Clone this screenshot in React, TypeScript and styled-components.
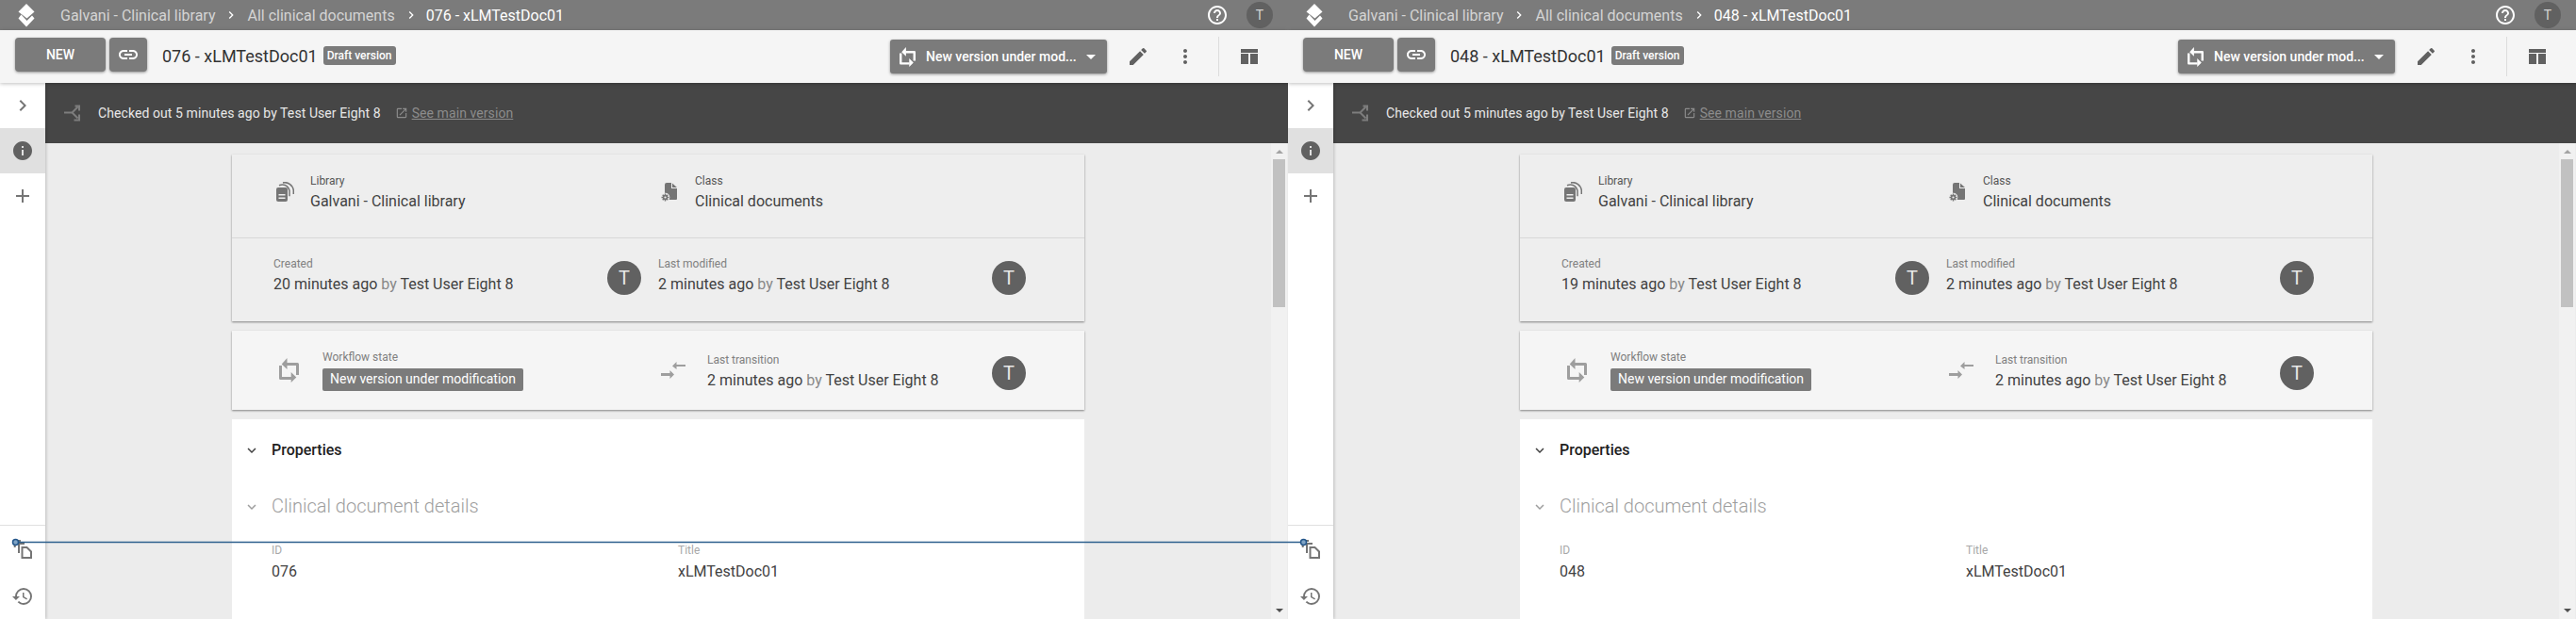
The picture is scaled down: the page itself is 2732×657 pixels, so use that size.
import React from "react";
import styled, { createGlobalStyle } from "styled-components";
import {
  MdAdd,
  MdArrowDropDown,
  MdChevronRight,
  MdEdit,
  MdExpandMore,
  MdHelpOutline,
  MdHistory,
  MdInfo,
  MdLink,
  MdMoreVert,
  MdOpenInNew,
} from "react-icons/md";

const GlobalStyle = createGlobalStyle`
  html, body {
    margin: 0;
    padding: 0;
    overflow: hidden;
    background: #ececec;
  }
  * {
    box-sizing: border-box;
  }
`;

const Page = styled.div`
  position: relative;
  display: flex;
  width: 2732px;
  height: 657px;
  overflow: hidden;
  font-family: Roboto, "Liberation Sans", sans-serif;
  color: #333333;
`;

const Pane = styled.section`
  display: flex;
  flex-direction: column;
  width: 1366px;
  height: 657px;
  overflow: hidden;
`;

const TopBar = styled.header`
  display: flex;
  align-items: center;
  flex: 0 0 32px;
  padding: 0 16px 0 19px;
  background: #7b7b7b;
  color: #d4d4d4;
  font-size: 16px;
`;

const Crumbs = styled.nav`
  display: flex;
  align-items: center;
  flex: 1;
  margin-left: 27px;
`;

const CrumbSep = styled.span`
  display: flex;
  width: 34px;
  justify-content: center;
  color: #fff;
  font-size: 16px;
`;

const CurrentCrumb = styled.span`
  color: #ffffff;
  margin-left: -1px;
`;

const HelpButton = styled.span`
  display: flex;
  margin-right: 19px;
  color: #ffffff;
  font-size: 24px;
`;

const HeaderAvatar = styled.span`
  display: flex;
  align-items: center;
  justify-content: center;
  width: 28px;
  height: 28px;
  border-radius: 50%;
  background: #616161;
  color: #d4d4d4;
  font-size: 14px;
`;

const Toolbar = styled.div`
  position: relative;
  z-index: 3;
  display: flex;
  align-items: center;
  flex: 0 0 56px;
  padding: 0 32px 0 16px;
  background: #f5f5f5;
  box-shadow: 0 1px 4px rgba(0, 0, 0, 0.25);
`;

const GreyButton = styled.button<{ $width: number }>`
  display: flex;
  align-items: center;
  justify-content: center;
  width: ${(p) => p.$width}px;
  height: 36px;
  margin: -4px 4px 0 0;
  padding: 0;
  border: 0;
  border-radius: 4px;
  background: #7b7b7b;
  box-shadow: 0 1px 3px rgba(0, 0, 0, 0.4);
  color: #ffffff;
  font: 500 14px Roboto, sans-serif;
`;

const DocTitle = styled.h1`
  margin: -2px 0 0 12px;
  color: #333333;
  font-size: 18px;
  font-weight: 400;
  white-space: nowrap;
`;

const DraftBadge = styled.span`
  margin: -2px 0 0 6px;
  padding: 2px 4px;
  height: 20px;
  border-radius: 3px;
  background: #7b7b7b;
  color: #ffffff;
  font-size: 12px;
  font-weight: 500;
  line-height: 16px;
  white-space: nowrap;
`;

const Spacer = styled.div`
  flex: 1;
`;

const StatusButton = styled.button`
  display: flex;
  align-items: center;
  width: 230px;
  height: 36px;
  padding: 0 0 0 10px;
  border: 0;
  border-radius: 3px;
  background: #7b7b7b;
  box-shadow: 0 1px 3px rgba(0, 0, 0, 0.4);
  color: #ffffff;
  font: 500 14px Roboto, sans-serif;
  white-space: nowrap;
`;

const StatusLabel = styled.span`
  width: 163px;
  margin-left: 11px;
  text-align: left;
`;

const ToolIcon = styled.span<{ $left: number }>`
  display: flex;
  margin-left: ${(p) => p.$left}px;
  color: #616161;
  font-size: 24px;
`;

const ToolDivider = styled.span`
  width: 1px;
  height: 42px;
  margin-left: 23px;
  background: #dddddd;
`;

const Body = styled.div`
  display: flex;
  flex: 1;
  min-height: 0;
`;

const Rail = styled.aside`
  position: relative;
  z-index: 2;
  display: flex;
  flex-direction: column;
  flex: 0 0 48px;
  background: #ffffff;
  box-shadow: 1px 0 3px rgba(0, 0, 0, 0.2);
  color: #757575;
`;

const RailItem = styled.div<{ $active?: boolean }>`
  display: flex;
  align-items: center;
  justify-content: center;
  height: 48px;
  background: ${(p) => (p.$active ? "#e0e0e0" : "transparent")};
  font-size: 24px;
  color: ${(p) => (p.$active ? "#616161" : "#757575")};
`;

const RailBottom = styled.div`
  margin-top: auto;
  padding-top: 3px;
  border-top: 1px solid #e0e0e0;
`;

const Main = styled.main`
  display: flex;
  flex-direction: column;
  flex: 1;
  min-width: 0;
`;

const Banner = styled.div`
  display: flex;
  align-items: center;
  flex: 0 0 64px;
  padding: 0 0 0 20px;
  background: #464646;
  color: #e8e8e8;
  font-size: 14px;
`;

const BannerText = styled.span`
  margin-left: 18px;
  letter-spacing: 0.08px;
`;

const MainLink = styled.a`
  display: flex;
  align-items: center;
  margin-left: 15px;
  color: #8c8c8c;
  letter-spacing: 0.08px;
  text-decoration: underline;
`;

const LinkIcon = styled.span`
  display: flex;
  margin-right: 4px;
  font-size: 14px;
`;

const ScrollArea = styled.div`
  display: flex;
  flex: 1;
  min-height: 0;
  background: #ececec;
`;

const Content = styled.div`
  display: flex;
  flex-direction: column;
  align-items: center;
  flex: 1;
  gap: 10px;
  padding-top: 12px;
  overflow: hidden;
`;

const Scrollbar = styled.div`
  display: flex;
  flex-direction: column;
  align-items: center;
  flex: 0 0 17px;
  margin-right: 1px;
  background: #f1f1f1;
`;

const ScrollArrow = styled.span<{ $down?: boolean }>`
  width: 0;
  height: 0;
  margin: ${(p) => (p.$down ? "auto 0 7px" : "7px 0 0")};
  border-left: 4px solid transparent;
  border-right: 4px solid transparent;
  border-bottom: ${(p) => (p.$down ? "0" : "4px solid #a3a3a3")};
  border-top: ${(p) => (p.$down ? "4px solid #505050" : "0")};
`;

const ScrollThumb = styled.span`
  width: 13px;
  height: 157px;
  margin-top: 6px;
  background: #c1c1c1;
`;

const Card = styled.article<{ $tone: string }>`
  flex: 0 0 auto;
  width: 904px;
  background: ${(p) => p.$tone};
  box-shadow: 0 1px 2px rgba(0, 0, 0, 0.45);
`;

const InfoRow = styled.div<{ $height: number; $line?: boolean }>`
  display: grid;
  grid-template-columns: 408px 408px;
  height: ${(p) => p.$height}px;
  padding: 0 44px;
  border-bottom: ${(p) => (p.$line ? "1px solid #d8d8d8" : "0")};
`;

const InfoCell = styled.div<{ $top: number }>`
  display: flex;
  padding: ${(p) => p.$top}px 18px 0 0;
`;

const CellIcon = styled.span<{ $width: number; $left: number; $pad: number }>`
  display: flex;
  align-items: flex-start;
  flex: 0 0 ${(p) => p.$width}px;
  padding: ${(p) => p.$pad}px 0 0 ${(p) => p.$left}px;
  color: #9e9e9e;
`;

const CellText = styled.div`
  flex: 1;
`;

const Caption = styled.div<{ $dark?: boolean }>`
  height: 16px;
  color: ${(p) => (p.$dark ? "#555555" : "#808080")};
  font-size: 12px;
  line-height: 16px;
`;

const Value = styled.div`
  margin-top: 4px;
  color: #424242;
  font-size: 16px;
  line-height: 20px;
  white-space: nowrap;
`;

const By = styled.span`
  color: #888888;
`;

const Avatar = styled.span<{ $offset: number }>`
  display: flex;
  align-items: center;
  justify-content: center;
  flex: 0 0 36px;
  height: 36px;
  margin-top: ${(p) => p.$offset}px;
  border-radius: 50%;
  background: #616161;
  color: #e8e8e8;
  font-size: 20px;
`;

const StateTag = styled.span`
  display: inline-block;
  height: 24px;
  margin-top: 4px;
  padding: 0 8px;
  border-radius: 2px;
  background: #7b7b7b;
  color: #ffffff;
  font-size: 14px;
  line-height: 22px;
`;

const PropertiesCard = styled.article`
  flex: 0 0 auto;
  width: 904px;
  height: 300px;
  padding: 20px 0 0 12px;
  background: #ffffff;
`;

const SectionHead = styled.div`
  display: flex;
  align-items: center;
  height: 24px;
  color: #212121;
  font-size: 16px;
  font-weight: 500;
`;

const GroupHead = styled.div`
  display: flex;
  align-items: center;
  height: 28px;
  margin-top: 34px;
  color: #9e9e9e;
  font-size: 20px;
  font-weight: 300;
`;

const Chevron = styled.span<{ $muted?: boolean }>`
  display: flex;
  width: 30px;
  margin-top: 2px;
  color: ${(p) => (p.$muted ? "#9e9e9e" : "#424242")};
  font-size: 18px;
`;

const FieldGrid = styled.div`
  display: grid;
  grid-template-columns: 431px 300px;
  margin: 25px 0 0 30px;
`;

const FieldLabel = styled.div`
  height: 16px;
  color: #a8a8a8;
  font-size: 12px;
  line-height: 16px;
`;

const FieldValue = styled.div`
  margin-top: 5px;
  color: #424242;
  font-size: 16px;
  line-height: 20px;
`;

const Connector = styled.svg`
  position: absolute;
  left: 0;
  top: 0;
  z-index: 5;
  pointer-events: none;
`;

const CopySvg = styled.svg`
  margin-bottom: 4px;
`;

const Logo = () => (
  <svg width="18" height="25" viewBox="0 0 18 25" fill="#ffffff">
    <path d="M9 0l8.500 8.500-8 7-9-7z" />
    <path d="M3.500 11.500L.5 15.500 9 24.500l8.500-9-2.500-3-5.500 5.500z" />
  </svg>
);

const BranchIcon = () => (
  <svg width="18" height="18" viewBox="0 0 18 18" fill="none" stroke="#7d7d7d" strokeWidth="2">
    <path d="M0 8.500h8.500L14.500 2.500M17 1.500H11.500M16 1v5.500M8.500 8.500l6 6M16 10.500v6H10.500" />
  </svg>
);

const LibraryIcon = () => (
  <svg width="19" height="21" viewBox="0 0 19 21">
    <path fill="#757575" d="M2 6h8a2 2 0 0 1 2 2v11a2 2 0 0 1-2 2H2a2 2 0 0 1-2-2V8a2 2 0 0 1 2-2z" />
    <path fill="#eeeeee" d="M2.500 13h7v1.500h-7zM2.500 16.500h7V18h-7z" />
    <path fill="none" stroke="#757575" strokeWidth="1.500" d="M3 3.800c4-1.500 9-1 11 5.500v6M7 .9c5-1.200 10.500 2.500 11.300 8v4" />
  </svg>
);

const ClassIcon = () => (
  <svg width="18" height="20" viewBox="0 0 18 20">
    <path fill="#757575" d="M6 0h5v6h6v11a1 1 0 0 1-1 1H6a2 2 0 0 1-2-2V2a2 2 0 0 1 2-2zM12 0.500l5 4.500h-5z" />
    <circle cx="4.500" cy="15.500" r="4.800" fill="#eeeeee" />
    <path stroke="#757575" strokeWidth="1.500" d="M4.500 11.500v8M.5 15.500h8M1.700 12.700l5.600 5.600M7.300 12.700l-5.600 5.600" />
    <circle cx="4.500" cy="15.500" r="2.700" fill="#757575" />
    <circle cx="4.500" cy="15.500" r="1.100" fill="#eeeeee" />
  </svg>
);

const WorkflowIcon = ({ width, height }: { width: number; height: number }) => (
  <svg width={width} height={height} viewBox="0 0 21 26" fill="currentColor">
    <path fill="none" stroke="currentColor" strokeWidth="3" strokeLinejoin="round" d="M8 6.500H19.500V18M13 21.500H1.500V8" />
    <path d="M2.700 6.500L8.500 0v12zM18.300 20.500L12.700 15v11z" />
  </svg>
);

const TransitionIcon = () => (
  <svg width="28" height="18" viewBox="0 0 28 18" fill="#9e9e9e">
    <path d="M27 5h-9.500V8L13 4.500 17.500 0v3H27zM1 12h9.500V9l4.500 4.500-4.500 4.500v-3H1z" />
  </svg>
);

const CopyIcon = () => (
  <CopySvg width="20" height="20" viewBox="0 0 20 20" fill="none" stroke="#757575" strokeWidth="2">
    <path d="M0 1h8M1.700 0v8M5 4h7M6 3v11M9.500 8h5L19 12.500V19H9.500z" />
  </CopySvg>
);

const LayoutIcon = () => (
  <svg width="18" height="16" viewBox="0 0 18 16" fill="#616161">
    <path d="M0 0h18v4H0zM0 5h8v11H0zM10 5h8v11h-8z" />
  </svg>
);

type Doc = { id: string; created: string };

const DocumentPane = ({ id, created }: Doc) => (
  <Pane>
    <TopBar>
      <Logo />
      <Crumbs>
        <span>Galvani - Clinical library</span>
        <CrumbSep>
          <MdChevronRight />
        </CrumbSep>
        <span>All clinical documents</span>
        <CrumbSep>
          <MdChevronRight />
        </CrumbSep>
        <CurrentCrumb>{id} - xLMTestDoc01</CurrentCrumb>
      </Crumbs>
      <HelpButton>
        <MdHelpOutline />
      </HelpButton>
      <HeaderAvatar>T</HeaderAvatar>
    </TopBar>
    <Toolbar>
      <GreyButton $width={96}>NEW</GreyButton>
      <GreyButton $width={40}>
        <MdLink size={24} />
      </GreyButton>
      <DocTitle>{id} - xLMTestDoc01</DocTitle>
      <DraftBadge>Draft version</DraftBadge>
      <Spacer />
      <StatusButton>
        <WorkflowIcon width={17} height={21} />
        <StatusLabel>New version under mod...</StatusLabel>
        <MdArrowDropDown size={24} />
      </StatusButton>
      <ToolIcon $left={21}>
        <MdEdit />
      </ToolIcon>
      <ToolIcon $left={26}>
        <MdMoreVert />
      </ToolIcon>
      <ToolDivider />
      <ToolIcon $left={23}>
        <LayoutIcon />
      </ToolIcon>
    </Toolbar>
    <Body>
      <Rail>
        <RailItem>
          <MdChevronRight />
        </RailItem>
        <RailItem $active>
          <MdInfo />
        </RailItem>
        <RailItem>
          <MdAdd />
        </RailItem>
        <RailBottom>
          <RailItem>
            <CopyIcon />
          </RailItem>
          <RailItem>
            <MdHistory />
          </RailItem>
        </RailBottom>
      </Rail>
      <Main>
        <Banner>
          <BranchIcon />
          <BannerText>Checked out 5 minutes ago by Test User Eight 8</BannerText>
          <MainLink>
            <LinkIcon>
              <MdOpenInNew />
            </LinkIcon>
            See main version
          </MainLink>
        </Banner>
        <ScrollArea>
          <Content>
            <Card $tone="#eeeeee">
              <InfoRow $height={89} $line>
                <InfoCell $top={20}>
                  <CellIcon $width={39} $left={3} $pad={9}>
                    <LibraryIcon />
                  </CellIcon>
                  <CellText>
                    <Caption $dark>Library</Caption>
                    <Value>Galvani - Clinical library</Value>
                  </CellText>
                </InfoCell>
                <InfoCell $top={20}>
                  <CellIcon $width={39} $left={3} $pad={10}>
                    <ClassIcon />
                  </CellIcon>
                  <CellText>
                    <Caption $dark>Class</Caption>
                    <Value>Clinical documents</Value>
                  </CellText>
                </InfoCell>
              </InfoRow>
              <InfoRow $height={88}>
                <InfoCell $top={19}>
                  <CellText>
                    <Caption>Created</Caption>
                    <Value>
                      {created} minutes ago <By>by</By> Test User Eight 8
                    </Value>
                  </CellText>
                  <Avatar $offset={5}>T</Avatar>
                </InfoCell>
                <InfoCell $top={19}>
                  <CellText>
                    <Caption>Last modified</Caption>
                    <Value>
                      2 minutes ago <By>by</By> Test User Eight 8
                    </Value>
                  </CellText>
                  <Avatar $offset={5}>T</Avatar>
                </InfoCell>
              </InfoRow>
            </Card>
            <Card $tone="#f5f5f5">
              <InfoRow $height={84}>
                <InfoCell $top={20}>
                  <CellIcon $width={52} $left={6} $pad={9}>
                    <WorkflowIcon width={21} height={26} />
                  </CellIcon>
                  <CellText>
                    <Caption>Workflow state</Caption>
                    <StateTag>New version under modification</StateTag>
                  </CellText>
                </InfoCell>
                <InfoCell $top={23}>
                  <CellIcon $width={52} $left={2} $pad={10}>
                    <TransitionIcon />
                  </CellIcon>
                  <CellText>
                    <Caption>Last transition</Caption>
                    <Value>
                      2 minutes ago <By>by</By> Test User Eight 8
                    </Value>
                  </CellText>
                  <Avatar $offset={4}>T</Avatar>
                </InfoCell>
              </InfoRow>
            </Card>
            <PropertiesCard>
              <SectionHead>
                <Chevron>
                  <MdExpandMore />
                </Chevron>
                Properties
              </SectionHead>
              <GroupHead>
                <Chevron $muted>
                  <MdExpandMore />
                </Chevron>
                Clinical document details
              </GroupHead>
              <FieldGrid>
                <div>
                  <FieldLabel>ID</FieldLabel>
                  <FieldValue>{id}</FieldValue>
                </div>
                <div>
                  <FieldLabel>Title</FieldLabel>
                  <FieldValue>xLMTestDoc01</FieldValue>
                </div>
              </FieldGrid>
            </PropertiesCard>
          </Content>
          <Scrollbar>
            <ScrollArrow />
            <ScrollThumb />
            <ScrollArrow $down />
          </Scrollbar>
        </ScrollArea>
      </Main>
    </Body>
  </Pane>
);

export default function App() {
  return (
    <Page>
      <GlobalStyle />
      <DocumentPane id="076" created="20" />
      <DocumentPane id="048" created="19" />
      <Connector width="2732" height="657" viewBox="0 0 2732 657">
        <path d="M17 575.500H1383" stroke="#2c5f8d" strokeWidth="1.500" fill="none" />
        <circle cx="16.500" cy="575.500" r="3" fill="#7fa3c4" stroke="#24568a" strokeWidth="1.500" />
        <circle cx="1382.500" cy="575.500" r="3" fill="#7fa3c4" stroke="#24568a" strokeWidth="1.500" />
      </Connector>
    </Page>
  );
}
